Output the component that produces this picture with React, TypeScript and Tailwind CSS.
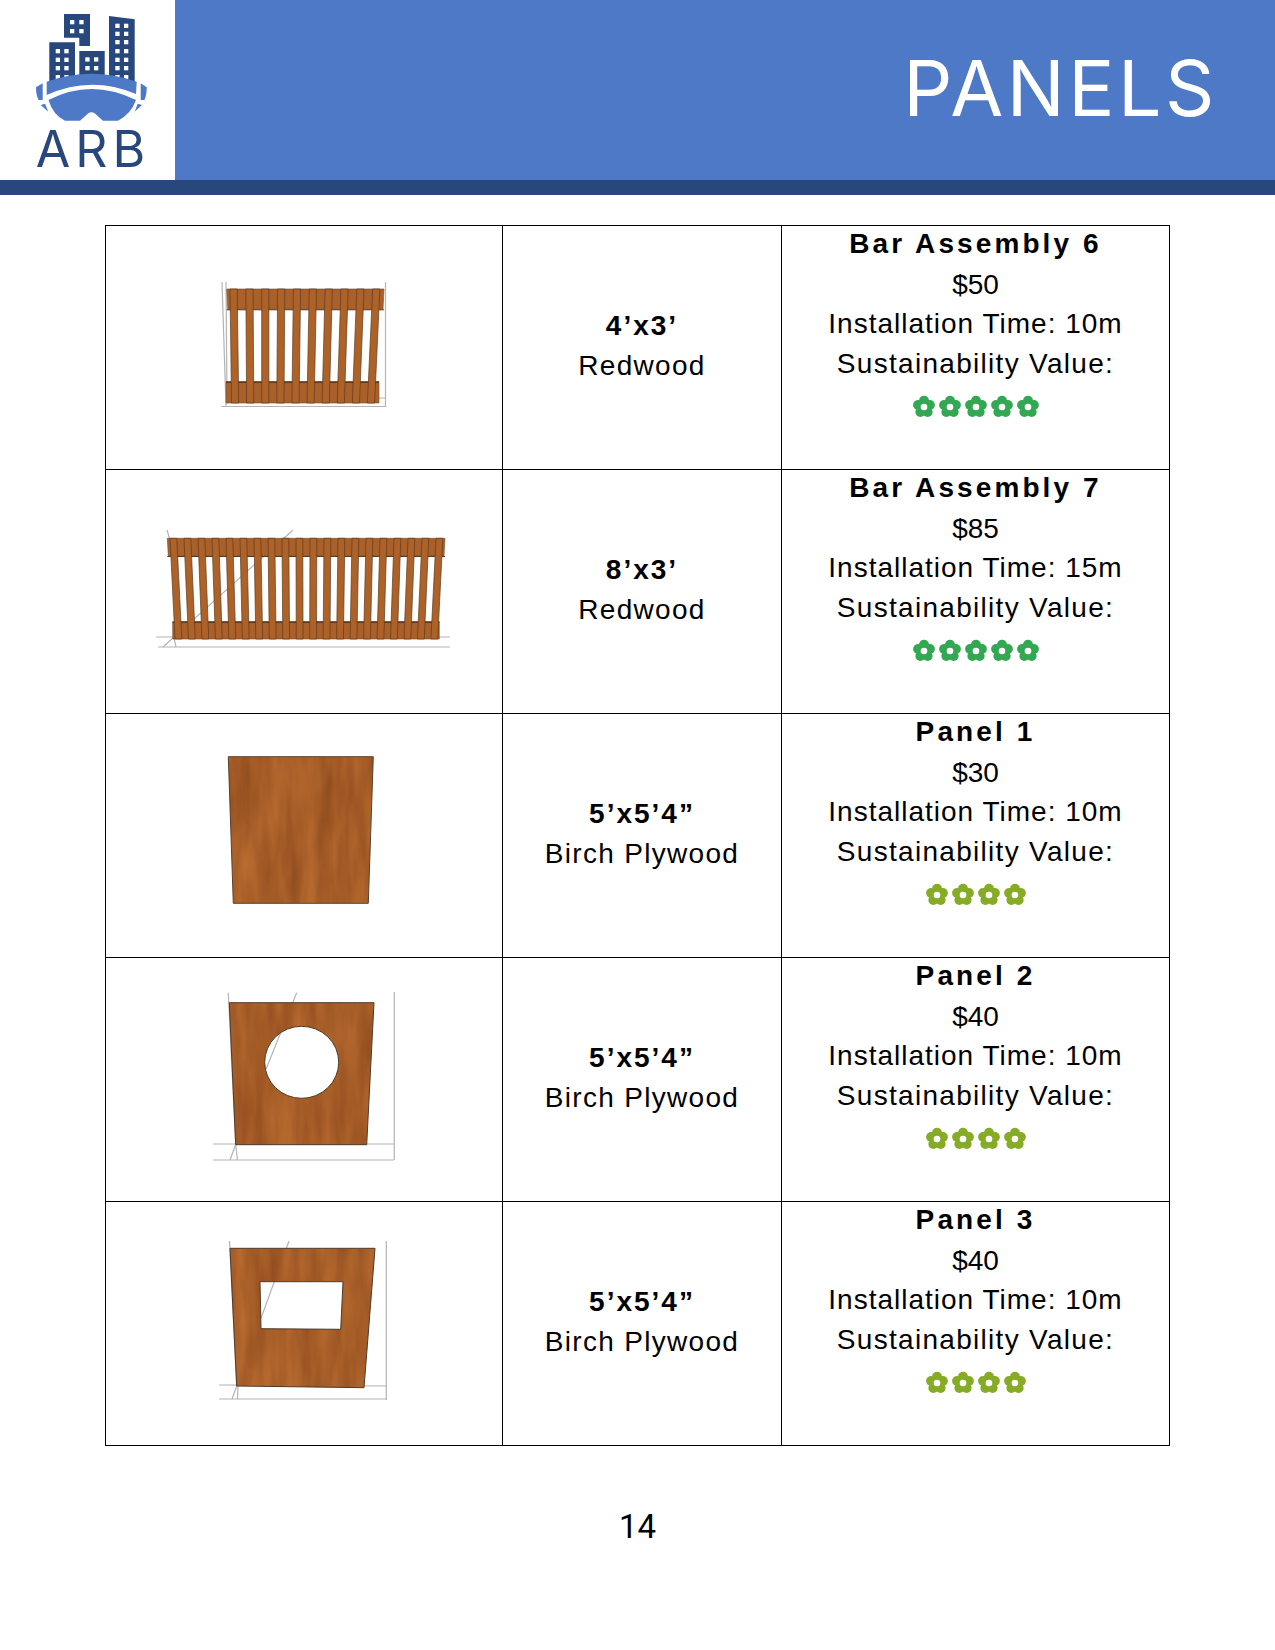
const rows = [
  { picture: <FenceSmall />, size: "4’x3’", material: "Redwood", name: "Bar Assembly 6", price: "$50", time: "10m", flowers: 5 },
  { picture: <FenceLarge />, size: "8’x3’", material: "Redwood", name: "Bar Assembly 7", price: "$85", time: "15m", flowers: 5 },
  { picture: <PanelPlain />, size: "5’x5’4”", material: "Birch Plywood", name: "Panel 1", price: "$30", time: "10m", flowers: 4 },
  { picture: <PanelCircle />, size: "5’x5’4”", material: "Birch Plywood", name: "Panel 2", price: "$40", time: "10m", flowers: 4 },
  { picture: <PanelWindow />, size: "5’x5’4”", material: "Birch Plywood", name: "Panel 3", price: "$40", time: "10m", flowers: 4 },
];

function WoodFilter({ id }: { id: string }) {
  return (
    <filter id={id} x="0" y="0" width="100%" height="100%" colorInterpolationFilters="sRGB">
      <feTurbulence type="fractalNoise" baseFrequency="0.06 0.012" numOctaves={3} seed={4} result="noise" />
      <feColorMatrix
        in="noise"
        type="matrix"
        values="0.22 0 0 0 0.54  0.17 0 0 0 0.28  0.09 0 0 0 0.11  0 0 0 0 1"
        result="wood"
      />
      <feComposite in="wood" in2="SourceGraphic" operator="in" />
    </filter>
  );
}

function GreyLines({ lines }: { lines: number[][] }) {
  return (
    <g stroke="#b4b4b4" strokeWidth="1.2" fill="none">
      {lines.map((l, i) => (
        <line key={i} x1={l[0]} y1={l[1]} x2={l[2]} y2={l[3]} />
      ))}
    </g>
  );
}

function Fence({ count, topRail, bottomRail, topX, topStep, bottomX, bottomStep, width }: {
  count: number;
  topRail: number[];
  bottomRail: number[];
  topX: number;
  topStep: number;
  bottomX: number;
  bottomStep: number;
  width: number;
}) {
  const [tl, tr, ty, tb] = topRail;
  const [bl, br, by, bb] = bottomRail;
  const pickets = Array.from({ length: count }, (_, i) => i);
  return (
    <g>
      <polygon points={`${tl},${ty} ${tr},${ty} ${tr - 1},${tb} ${tl + 1},${tb}`} fill="#a9602b" stroke="#7a4a24" strokeWidth="0.6" />
      <polygon points={`${bl},${by} ${br},${by} ${br},${bb} ${bl},${bb}`} fill="#a9602b" stroke="#7a4a24" strokeWidth="0.6" />
      <line x1={tl} y1={tb + 0.5} x2={tr} y2={tb + 0.5} stroke="#5a3a1e" strokeWidth="1" />
      <line x1={bl} y1={by + 0.5} x2={br} y2={by + 0.5} stroke="#4a2c14" strokeWidth="1.2" />
      {pickets.map((i) => {
        const a = topX + topStep * i;
        const b = bottomX + bottomStep * i;
        return (
          <polygon
            key={i}
            points={`${a},${ty} ${a + width},${ty} ${b + width},${bb} ${b},${bb}`}
            fill="#ad6229"
            stroke="#5f3b1c"
            strokeWidth="0.7"
          />
        );
      })}
    </g>
  );
}

function Picture({ y, children }: { y: number; children: React.ReactNode }) {
  // viewBox is in page coordinates, so shapes can be read straight off the reference
  return (
    <svg width="396" height="243" viewBox={`106 ${y} 396 243`} className="block">
      {children}
    </svg>
  );
}

function FenceSmall() {
  return (
    <Picture y={226}>
      <GreyLines lines={[[222, 282, 226, 407], [226, 282, 227, 404], [385.5, 282, 385.5, 407], [221, 406.5, 385.5, 406.5], [226, 398, 385, 398]]} />
      <Fence count={10} topRail={[226.7, 384, 289, 309.3]} bottomRail={[226, 379, 381.7, 403]} topX={230} topStep={15.85} bottomX={231.5} bottomStep={15.1} width={7.2} />
    </Picture>
  );
}

function FenceLarge() {
  return (
    <Picture y={470}>
      <GreyLines lines={[[167, 530, 170, 540], [293, 530, 163, 647], [156, 637, 450, 637], [158, 647, 450, 647], [174, 638, 176, 647]]} />
      <Fence count={20} topRail={[167.3, 445, 538.3, 556]} bottomRail={[172.7, 439.3, 621.7, 639]} topX={170} topStep={14} bottomX={175} bottomStep={13.47} width={6.8} />
    </Picture>
  );
}

function PanelPlain() {
  const d = "M228.3 756.7 L373.3 756.7 L368.3 903.3 L233.3 903.3 Z";
  return (
    <Picture y={714}>
      <WoodFilter id="wood-plain" />
      <path d={d} filter="url(#wood-plain)" />
      <path d={d} fill="none" stroke="#5a4030" strokeWidth="1" />
    </Picture>
  );
}

function PanelCircle() {
  const d =
    "M229.3 1002.7 L374 1002.7 L366.7 1144.7 L235.7 1144.7 Z M264.7 1062.3 A37 36 0 0 0 338.7 1062.3 A37 36 0 0 0 264.7 1062.3 Z";
  return (
    <Picture y={958}>
      <GreyLines lines={[[394.3, 992, 394.3, 1160], [213, 1144, 394, 1144], [213, 1160, 394, 1160], [296.7, 992.7, 265.7, 1070], [228.3, 992.7, 235.7, 1144.7], [235.7, 1144.7, 230, 1160], [235.7, 1144.7, 237.5, 1160]]} />
      <WoodFilter id="wood-circle" />
      <path d={d} fillRule="evenodd" filter="url(#wood-circle)" />
      <path d={d} fill="none" stroke="#4f3a2a" strokeWidth="1" />
    </Picture>
  );
}

function PanelWindow() {
  const d =
    "M230 1248.3 L375 1248.3 L364 1387.7 L236.7 1386 Z M260 1281.7 L261 1328.7 L340.7 1329.3 L343 1281.7 Z";
  return (
    <Picture y={1202}>
      <GreyLines lines={[[386.3, 1241, 386.3, 1400], [219, 1399, 386, 1399], [219, 1385, 386, 1386], [289, 1241, 261, 1318.3], [229.5, 1241, 236.7, 1386], [236.7, 1386, 232, 1399], [238, 1386, 237.5, 1399]]} />
      <WoodFilter id="wood-window" />
      <path d={d} fillRule="evenodd" filter="url(#wood-window)" />
      <path d={d} fill="none" stroke="#4f3a2a" strokeWidth="1" />
    </Picture>
  );
}

function Flower({ color }: { color: string }) {
  const petals = [0, 72, 144, 216, 288];
  return (
    <svg width="26" height="24" viewBox="-13 -12 26 24" className="block">
      {petals.map((a) => (
        <circle
          key={a}
          cx={6.2 * Math.sin((a * Math.PI) / 180)}
          cy={-6.2 * Math.cos((a * Math.PI) / 180)}
          r="5"
          fill={color}
        />
      ))}
      <circle r="5" fill={color} />
      <circle r="3.3" fill="#ffffff" />
    </svg>
  );
}

function Logo() {
  const win = (cols: number[], rws: number[]) =>
    rws.flatMap((y) => cols.map((x) => <rect key={`${x}-${y}`} x={x} y={y} width="4.3" height="4.3" fill="#ffffff" />));
  return (
    <svg width="175" height="180" viewBox="0 0 175 180" className="block">
      <path d="M64 14 H90 V46 H79.3 V37.7 H64 Z" fill="#27477d" />
      <path d="M49.3 42.3 H75 V80 L49.3 82 Z" fill="#27477d" />
      <path d="M79.3 51 H104.7 V76 H79.3 Z" fill="#27477d" />
      <path d="M109 16 L134.7 19.3 V82 L109 78.3 Z" fill="#27477d" />
      {win([70, 79.3], [20, 29])}
      {win([55.7, 64.3], [49, 57.7, 66, 75])}
      {win([85.3, 94], [57.3, 66])}
      {win([115.3, 124], [23.7, 31.7, 40, 49, 57.7, 66, 75])}
      <path d="M46.7 81.7 Q91 66 136.7 81.7 L136 94 Q91 75 46.7 95 Z" fill="#4e79c7" />
      <path d="M48.5 100 Q91 78 136 100 Q131 114 118 120.7 H103 L95 113.5 Q91.5 111 88 113.5 L80 120.7 H65 Q53 115 48.5 100 Z" fill="#4e79c7" />
      <path d="M36 87.3 L42.7 83.3 V100 H38.5 Q36 95 36 87.3 Z" fill="#4e79c7" />
      <path d="M40.7 105 L45 103.7 L48.3 111.7 Z" fill="#4e79c7" />
      <path d="M146.7 87.3 L140.7 83.3 V100 H144.5 Q146.7 95 146.7 87.3 Z" fill="#4e79c7" />
      <path d="M142 105 L137.7 103.7 L134.7 111.7 Z" fill="#4e79c7" />
      <text x="93" y="166.5" textAnchor="middle" fontFamily="Inter, sans-serif" fontSize="50" letterSpacing="5" fill="#27477d">
        ARB
      </text>
    </svg>
  );
}

export default function App() {
  return (
    <div className="w-[1275px] h-[1650px] bg-white font-['Liberation_Sans',sans-serif] text-black">
      <header className="flex h-[195px] border-b-[15px] border-[#27477d]">
        <div className="w-[175px] bg-white">
          <Logo />
        </div>
        <div className="flex flex-1 items-center justify-end bg-[#4e79c7] pr-[57px] pb-[4px]">
          <h1 className="font-['Inter',sans-serif] text-[77px] leading-none tracking-[3.5px] text-white">PANELS</h1>
        </div>
      </header>

      <div className="mx-[105px] mt-[30px] border-t border-l border-black">
        {rows.map((r) => (
          <div key={r.name} className="grid h-[244px] grid-cols-[397px_279px_388px] border-b border-black">
            <div className="border-r border-black">{r.picture}</div>
            <div className="flex flex-col items-center justify-center border-r border-black pb-[4px] text-[28px] leading-[39.5px] tracking-[1.3px]">
              <div className="font-bold tracking-[2px]">{r.size}</div>
              <div>{r.material}</div>
            </div>
            <div className="flex flex-col items-center border-r border-black text-[28px] leading-[39.5px] tracking-[1px]">
              <div className="-mt-[2px] font-bold tracking-[3.1px]">{r.name}</div>
              <div className="mt-px tracking-normal">{r.price}</div>
              <div>Installation Time: {r.time}</div>
              <div className="tracking-[1.3px]">Sustainability Value:</div>
              <div className="mt-[12px] flex">
                {Array.from({ length: r.flowers }, (_, i) => (
                  <Flower key={i} color={r.flowers === 5 ? "#33a852" : "#86ac25"} />
                ))}
              </div>
            </div>
          </div>
        ))}
      </div>

      <div className="mt-[60px] text-center font-['Roboto',sans-serif] text-[33px] leading-[42px]">14</div>
    </div>
  );
}
